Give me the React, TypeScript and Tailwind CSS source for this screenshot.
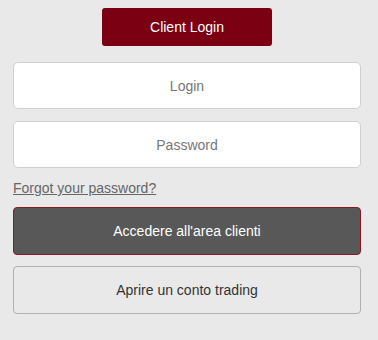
export default function App() {
  return (
    <div className="min-h-screen w-full bg-[#e9e9e9] font-['Liberation_Sans',Arial,sans-serif]">
      <div className="flex flex-col pl-[13px] pr-[17px] pt-2 pb-6">
        <div className="flex justify-center">
          <button className="h-[38px] w-[170px] rounded-[3px] bg-[#7a0012] text-[14px] text-white">
            Client Login
          </button>
        </div>
        <input
          placeholder="Login"
          className="mt-[16px] h-[47px] w-full rounded-[5px] border border-[#d0d0d0] bg-white text-center text-[14px] text-[#555] outline-none placeholder:text-[#777]"
        />
        <input
          type="password"
          placeholder="Password"
          className="mt-[12px] h-[47px] w-full rounded-[5px] border border-[#d0d0d0] bg-white text-center text-[14px] text-[#555] outline-none placeholder:text-[#777]"
        />
        <a href="#" className="mt-[11px] self-start text-[14px] leading-[18px] text-[#666] underline">
          Forgot your password?
        </a>
        <button className="mt-[10px] h-[48px] w-full rounded-[4px] border border-[#8a1a22] bg-[#585858] text-[14px] text-white">
          Accedere all'area clienti
        </button>
        <button className="mt-[11px] h-[48px] w-full rounded-[4px] border border-[#b0b0b0] bg-transparent text-[14px] text-[#333]">
          Aprire un conto trading
        </button>
      </div>
    </div>
  );
}
